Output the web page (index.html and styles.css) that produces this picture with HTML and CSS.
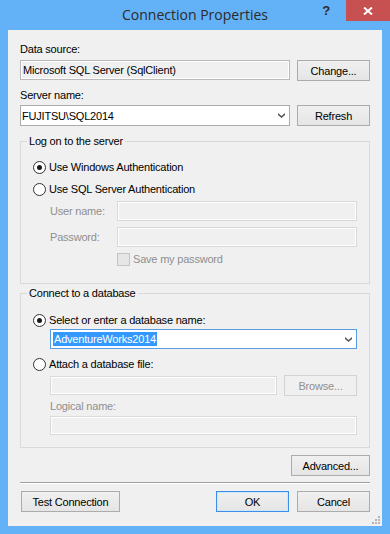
FILE: index.html
```html
<!DOCTYPE html>
<html>
<head>
<meta charset="utf-8">
<link rel="stylesheet" href="styles.css">
</head>
<body>
<div class="window">
  <div class="titlebar">
    <div></div>
    <div class="title">Connection Properties</div>
    <div class="tb-right">
      <span class="help">?</span>
      <div class="close">
        <svg width="10" height="8" viewBox="0 0 10 8"><path d="M1 0.5 L9 7.5 M9 0.5 L1 7.5" stroke="#fff" stroke-width="2" fill="none"/></svg>
      </div>
    </div>
  </div>
  <div class="client">
    <div class="label l-ds">Data source:</div>
    <div class="row r1">
      <div class="textbox ro">Microsoft SQL Server (SqlClient)</div>
      <div class="btn">Change...</div>
    </div>
    <div class="label l-sn">Server name:</div>
    <div class="row r2">
      <div class="combo server"><span>FUJITSU\SQL2014</span>
        <svg class="chev" width="7" height="5" viewBox="0 0 7 5"><polygon points="0,0 3.5,3 7,0 7,2 3.5,5 0,2" fill="#555"/></svg>
      </div>
      <div class="btn">Refresh</div>
    </div>

    <div class="group g1">
      <div class="legend">Log on to the server</div>
      <div class="opt o1"><span class="radio checked"></span><span>Use Windows Authentication</span></div>
      <div class="opt o2"><span class="radio"></span><span>Use SQL Server Authentication</span></div>
      <div class="creds">
        <span class="dis">User name:</span><div class="textbox disabled"></div>
        <span class="dis">Password:</span><div class="textbox disabled"></div>
      </div>
      <div class="check-row"><span class="checkbox"></span><span class="dis">Save my password</span></div>
    </div>

    <div class="group g2">
      <div class="legend">Connect to a database</div>
      <div class="opt o3"><span class="radio checked"></span><span>Select or enter a database name:</span></div>
      <div class="combo db"><span class="sel">AdventureWorks2014</span>
        <svg class="chev" width="7" height="5" viewBox="0 0 7 5"><polygon points="0,0 3.5,3 7,0 7,2 3.5,5 0,2" fill="#555"/></svg>
      </div>
      <div class="opt o4"><span class="radio"></span><span>Attach a database file:</span></div>
      <div class="file-row">
        <div class="textbox disabled file"></div>
        <div class="btn disabled-btn">Browse...</div>
      </div>
      <div class="label dis l-log">Logical name:</div>
      <div class="textbox disabled logical"></div>
    </div>

    <div class="btn advanced">Advanced...</div>
    <div class="separator"></div>
    <div class="bottom-row">
      <div class="btn test">Test Connection</div>
      <div class="btn ok">OK</div>
      <div class="btn">Cancel</div>
    </div>
    <svg class="grip" width="9" height="9" viewBox="0 0 9 9">
      <rect x="7" y="1" width="2" height="2" fill="#b5b5b5"/>
      <rect x="4" y="4" width="2" height="2" fill="#b5b5b5"/>
      <rect x="7" y="4" width="2" height="2" fill="#b5b5b5"/>
      <rect x="1" y="7" width="2" height="2" fill="#b5b5b5"/>
      <rect x="4" y="7" width="2" height="2" fill="#b5b5b5"/>
      <rect x="7" y="7" width="2" height="2" fill="#b5b5b5"/>
    </svg>
  </div>
</div>
</body>
</html>
```

FILE: styles.css
```css
* { box-sizing: border-box; }
html, body { margin: 0; padding: 0; }
body { background: #63b1f6; }

.window {
  width: 390px;
  height: 534px;
  display: flex;
  flex-direction: column;
  background: #63b1f6;
  font-family: "Liberation Sans", Arial, sans-serif;
  font-size: 11px;
  letter-spacing: -0.2px;
  color: #000;
}

.titlebar {
  height: 30px;
  display: grid;
  grid-template-columns: 1fr auto 1fr;
}
.title {
  font-family: "Open Sans", "Noto Sans", sans-serif;
  font-size: 14px;
  letter-spacing: 0;
  line-height: 29px;
  color: #2b2b2b;
}
.tb-right {
  display: flex;
  justify-content: flex-end;
  align-items: flex-start;
}
.help {
  font-family: "Liberation Sans", Arial, sans-serif;
  font-weight: bold;
  font-size: 13px;
  line-height: 22px;
  color: #2b2b2b;
  margin-right: 16px;
}
.close {
  width: 44px;
  height: 21px;
  background: #c75050;
  display: flex;
  align-items: center;
  justify-content: center;
}

.client {
  flex: 1;
  margin: 0 8px 8px;
  background: #f0f0f0;
  padding: 0 12px;
  display: flex;
  flex-direction: column;
  position: relative;
}

.label { line-height: 13px; height: 13px; }
.l-ds { margin-top: 13px; }
.l-sn { margin-top: 8px; }

.row { display: flex; align-items: flex-start; }
.r1 { margin-top: 4px; }
.r2 { margin-top: 3px; }

.textbox {
  border: 1px solid #b9b9b9;
  box-shadow: inset 0 0 0 1px #fff;
  background: #f0f0f0;
}
.textbox.ro {
  width: 270px;
  height: 20px;
  line-height: 18px;
  padding-left: 2px;
}
.textbox.disabled {
  border-color: #d9d9d9;
  height: 20px;
}

.btn {
  width: 73px;
  height: 21px;
  border: 1px solid #acacac;
  background: linear-gradient(#f0f0f0, #e5e5e5);
  display: flex;
  align-items: center;
  justify-content: center;
  color: #000;
}
.row .btn { margin-left: auto; }

.combo {
  display: flex;
  align-items: center;
  border: 1px solid #acacac;
  background: #fff;
  padding-left: 1px;
  padding-right: 4px;
}
.combo .chev { margin-left: auto; }
.combo.server {
  width: 270px;
  height: 21px;
}

.group {
  border: 1px solid #d9d9d9;
  display: flex;
  flex-direction: column;
  padding: 0 12px;
}
.legend {
  align-self: flex-start;
  line-height: 13px;
  height: 13px;
  margin: -7px 0 0 -6px;
  padding: 0 2px;
  background: #f0f0f0;
}
.g1 { margin-top: 15px; padding-bottom: 15px; }
.g2 { margin-top: 9px; padding-bottom: 12px; }

.opt {
  display: flex;
  align-items: center;
  gap: 3px;
  height: 22px;
}
.o1 { margin-top: 8px; }
.o3 { margin-top: 11px; height: 18px; }
.o4 { margin-top: 6px; height: 18px; }

.radio {
  width: 13px;
  height: 13px;
  border-radius: 50%;
  border: 1px solid #333;
  background: #fff;
  display: flex;
  align-items: center;
  justify-content: center;
}
.radio.checked::after {
  content: "";
  width: 5px;
  height: 5px;
  border-radius: 50%;
  background: #1a1a1a;
}

.dis { color: #8f8f8f; }

.creds {
  margin: 1px 0 0 17px;
  display: grid;
  grid-template-columns: 67px 1fr;
  grid-auto-rows: 20px;
  row-gap: 6px;
  align-items: center;
}

.check-row {
  margin: 3px 0 0 84px;
  height: 18px;
  display: flex;
  align-items: center;
  gap: 3px;
}
.checkbox {
  width: 13px;
  height: 13px;
  border: 1px solid #c4c4c4;
  background: #e6e6e6;
}

.combo.db {
  margin-left: 17px;
  height: 20px;
  border-color: #569de5;
  padding-left: 2px;
}
.sel {
  background: #3399ff;
  color: #fff;
  line-height: 14px;
  padding: 0 1px 0 1px;
}

.file-row {
  margin: 2px 0 0 17px;
  display: flex;
  align-items: center;
  justify-content: space-between;
}
.textbox.file { width: 227px; height: 19px; }
.disabled-btn {
  border-color: #d3d3d3;
  background: #f0f0f0;
  color: #8f8f8f;
}

.l-log { margin: 4px 0 0 17px; }
.textbox.logical { margin: 3px 0 0 17px; height: 19px; }

.advanced {
  align-self: flex-end;
  width: 79px;
  margin-top: 7px;
}
.separator {
  margin-top: 6px;
  border-top: 1px solid #a0a0a0;
  border-bottom: 1px solid #fff;
}
.bottom-row {
  margin-top: 7px;
  display: flex;
  gap: 8px;
}
.btn.test { width: 99px; margin-left: 1px; }
.btn.ok {
  margin-left: auto;
  border-color: #3c8fe6;
  box-shadow: inset 0 0 0 1px #cfe5fa;
}

.grip {
  position: absolute;
  right: 2px;
  bottom: 2px;
}
```
